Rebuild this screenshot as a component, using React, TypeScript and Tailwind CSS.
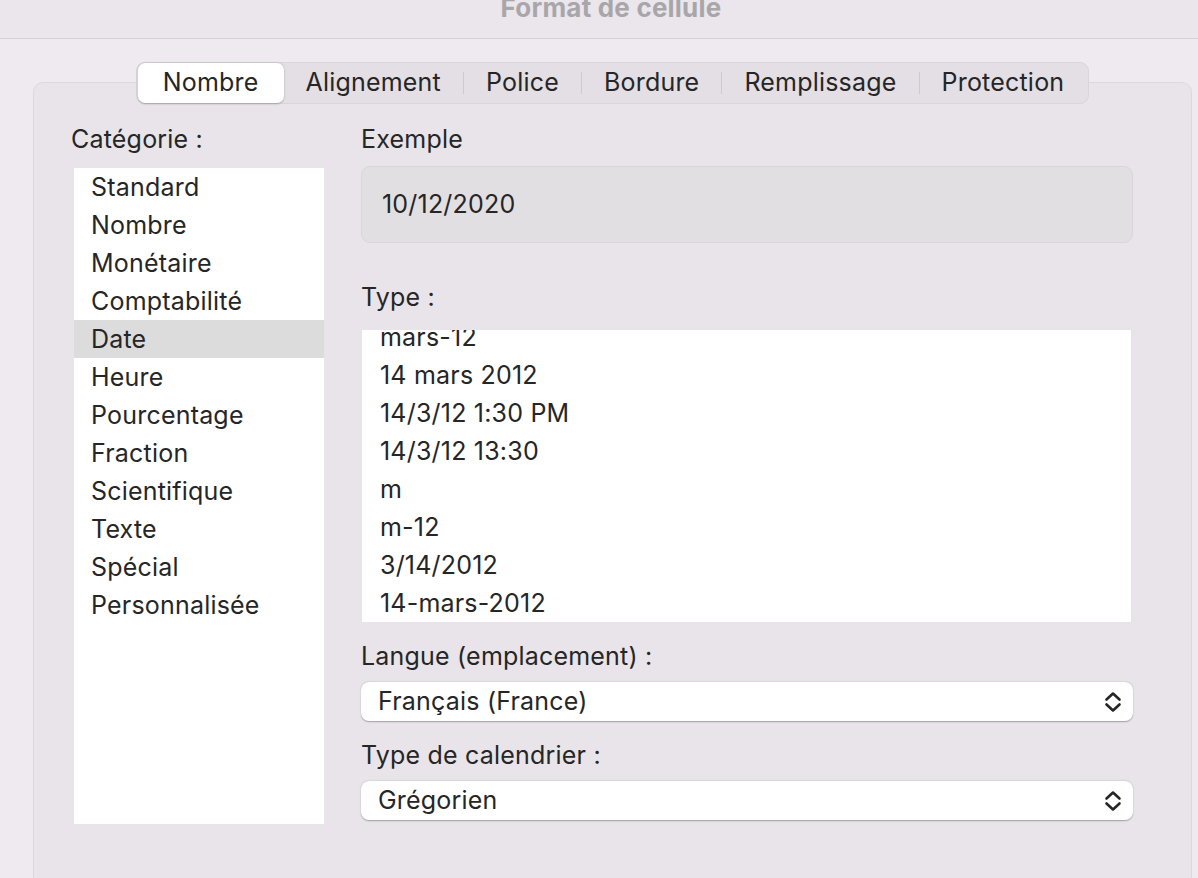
const categories = [
  "Standard",
  "Nombre",
  "Monétaire",
  "Comptabilité",
  "Date",
  "Heure",
  "Pourcentage",
  "Fraction",
  "Scientifique",
  "Texte",
  "Spécial",
  "Personnalisée",
];

const types = [
  "mars-12",
  "14 mars 2012",
  "14/3/12 1:30 PM",
  "14/3/12 13:30",
  "m",
  "m-12",
  "3/14/2012",
  "14-mars-2012",
];

const tabs = ["Nombre", "Alignement", "Police", "Bordure", "Remplissage", "Protection"];

function Chevrons() {
  return (
    <svg width="18" height="24" viewBox="0 0 18 24" fill="none" className="shrink-0">
      <path d="M2.5 9.5 L9 3.5 L15.5 9.5" stroke="#262626" strokeWidth="2.6" strokeLinecap="round" strokeLinejoin="round" />
      <path d="M2.5 14.5 L9 20.5 L15.5 14.5" stroke="#262626" strokeWidth="2.6" strokeLinecap="round" strokeLinejoin="round" />
    </svg>
  );
}

function Select({ value }: { value: string }) {
  return (
    <div className="h-[39px] w-[772px] bg-white rounded-[8px] shadow-[0_0.5px_1.5px_rgba(0,0,0,0.3)] flex items-center justify-between pl-[17px] pr-[11px]">
      <span>{value}</span>
      <Chevrons />
    </div>
  );
}

export default function App() {
  return (
    <div
      className="w-[1198px] h-[878px] overflow-hidden bg-[#eeeaef] text-[#262626] text-[25px] tracking-[0.2px]"
      style={{ fontFamily: "Inter, 'Noto Sans', sans-serif" }}
    >
      {/* title bar */}
      <div className="h-[39px] bg-[#eae6eb] border-b border-[#d5d1d6] flex justify-center overflow-hidden pl-[24px]">
        <span className="-mt-[8px] text-[26px] font-bold text-[#a9a6aa] leading-[32px] tracking-[0.2px]">
          Format de cellule
        </span>
      </div>

      <div className="pt-[23px] pl-[33px] pr-[6px]">
        {/* tabs */}
        <div className="relative z-10 flex justify-center">
          <div className="flex items-center h-[42px] bg-[#e3dfe4] border border-[#d9d5da] rounded-[9px] pl-[1px] pr-[2px]">
            {tabs.map((t, i) => (
              <div key={t} className="flex items-center">
                {i > 1 && <div className="w-px h-[22px] bg-[#cdc9ce]" />}
                {i === 0 ? (
                  <div className="h-[40px] px-[25px] bg-white rounded-[7px] shadow-[0_0.5px_2px_rgba(0,0,0,0.25)] flex items-center">
                    {t}
                  </div>
                ) : (
                  <div className="h-[40px] px-[22px] flex items-center">{t}</div>
                )}
              </div>
            ))}
          </div>
        </div>

        {/* panel */}
        <div className="-mt-[22px] h-[820px] bg-[#e8e4e9] border border-[#dcd8dd] rounded-[10px] pt-[41px] pl-[37px] flex">
          {/* left column */}
          <div className="flex flex-col w-[290px]">
            <div className="h-[30px] leading-[30px]">Catégorie :</div>
            <div className="mt-[14px] ml-[3px] w-[250px] h-[656px] bg-white">
              {categories.map((c) => (
                <div
                  key={c}
                  className={`h-[38px] flex items-center pl-[17px] pt-[1px] ${c === "Date" ? "bg-[#dcdcdc]" : ""}`}
                >
                  {c}
                </div>
              ))}
            </div>
          </div>

          {/* right column */}
          <div className="flex flex-col">
            <div className="h-[30px] leading-[30px]">Exemple</div>
            <div className="mt-[12px] w-[772px] h-[77px] bg-[#e2dfe3] border border-[#d9d5da] rounded-[9px] flex items-center pl-[20px]">
              10/12/2020
            </div>

            <div className="mt-[39px] h-[30px] leading-[30px]">Type :</div>
            <div className="mt-[18px] ml-[1px] w-[769px] h-[292px] bg-white overflow-hidden">
              <div className="-mt-[12px]">
                {types.map((t) => (
                  <div key={t} className="h-[38px] flex items-center pl-[18px] pt-[1px]">
                    {t}
                  </div>
                ))}
              </div>
            </div>

            <div className="mt-[19px] h-[30px] leading-[30px]">Langue (emplacement) :</div>
            <div className="mt-[11px]">
              <Select value="Français (France)" />
            </div>

            <div className="mt-[19px] h-[30px] leading-[30px]">Type de calendrier :</div>
            <div className="mt-[11px]">
              <Select value="Grégorien" />
            </div>
          </div>
        </div>
      </div>
    </div>
  );
}
